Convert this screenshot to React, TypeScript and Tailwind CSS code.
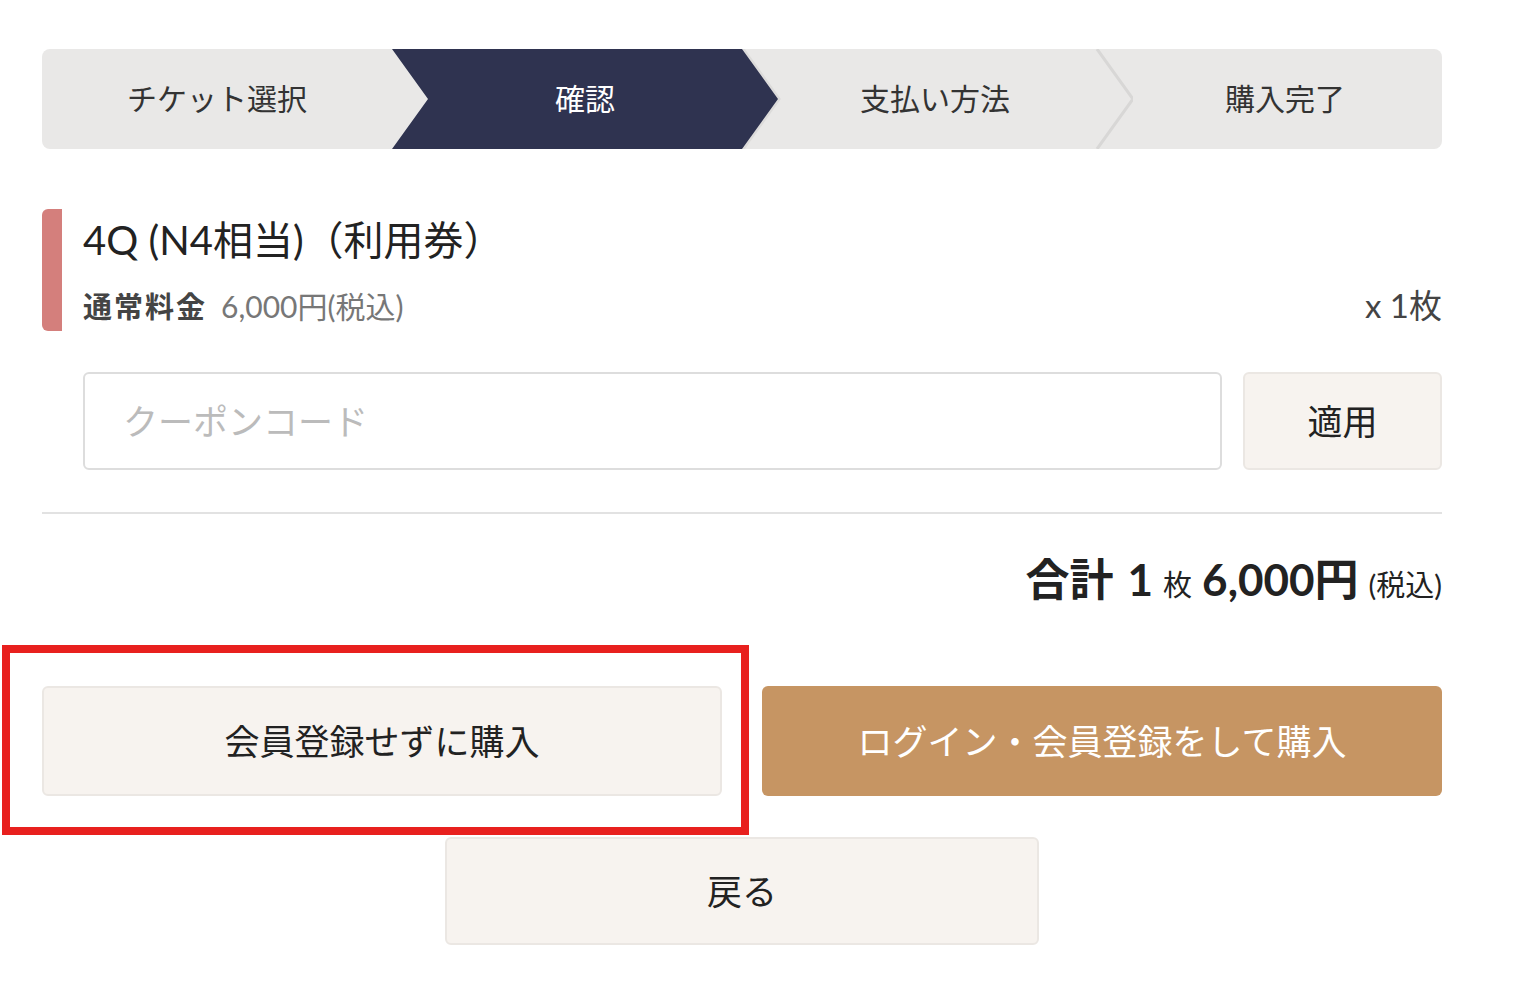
const font = "font-['Lato','Noto_Sans_CJK_JP',sans-serif]";

function Stepper() {
    const steps = ["チケット選択", "確認", "支払い方法", "購入完了"];
    const active = 1;

    return (
        <div className="relative flex h-[100px] rounded-lg bg-[#e9e8e7]">
            {steps.map((label, i) => (
                <div key={label} className="relative flex-1">
                    {/* active chevron */}
                    {i === active && (
                        <div className="absolute inset-y-0 left-0 z-10 w-[calc(100%+36px)] bg-[#2f3350] [clip-path:polygon(0_0,calc(100%-36px)_0,100%_50%,calc(100%-36px)_100%,0_100%,36px_50%)]" />
                    )}
                    {/* faint separator after inactive steps */}
                    {i > active && i < steps.length - 1 && (
                        <svg className="absolute top-0 right-[-41px] h-[100px] w-[40px]" viewBox="0 0 40 100">
                            <polyline points="4,0 40,50 4,100" fill="none" stroke="#d8d7d6" strokeWidth="3" />
                        </svg>
                    )}
                    {i === active && (
                        <svg className="absolute top-0 right-[-40px] h-[100px] w-[40px]" viewBox="0 0 40 100">
                            <polyline points="1,0 37,50 1,100" fill="none" stroke="#dcdbda" strokeWidth="3" />
                        </svg>
                    )}
                    <div
                        className={`relative z-20 flex h-full items-center justify-center pb-[2px] text-[30px] ${
                            i > 0 ? "pl-[36px]" : ""
                        } ${i === active ? "text-white" : "text-[#333]"}`}
                    >
                        {label}
                    </div>
                </div>
            ))}
        </div>
    );
}

function App() {
    return (
        <div className={`relative min-h-[988px] bg-white ${font}`}>
            <div className="w-[1400px] ml-[42px] pt-[49px]">
                {/* Steps */}
                <Stepper />

                {/* Ticket */}
                <div className="mt-[60px] flex h-[122px]">
                    <div className="w-[20px] rounded-l-md bg-[#d47f7c]" />
                    <div className="flex-1 pl-[21px]">
                        <div className="flex h-[62px] items-center text-[40px] text-[#222]">
                            4Q (N4相当)（利用券）
                        </div>
                        <div className="mt-[10px] flex h-[50px] items-center justify-between">
                            <div className="flex items-baseline gap-[14px]">
                                <span className="text-[29px] font-bold tracking-[2px] text-[#444]">通常料金</span>
                                <span className="text-[30px] text-[#777]">6,000円(税込)</span>
                            </div>
                            <div className="text-[33px] text-[#444]">x 1枚</div>
                        </div>
                    </div>
                </div>

                {/* Coupon */}
                <div className="mt-[41px] flex gap-[21px] pl-[41px]">
                    <input
                        placeholder="クーポンコード"
                        className="h-[98px] flex-1 rounded-md border-2 border-[#dddddd] px-[38px] text-[35px] text-[#333] outline-none placeholder:text-[#bbbbbb]"
                    />
                    <button className="h-[98px] w-[199px] rounded-md border-2 border-[#ebe7e3] bg-[#f7f3ef] text-[35px] text-[#222]">
                        適用
                    </button>
                </div>

                <div className="mt-[42px] border-t-2 border-[#e2e2e2]" />

                {/* Total */}
                <div className="mt-[32px] flex h-[56px] items-baseline justify-end text-[#222]">
                    <span className="text-[44px] font-bold">合計</span>
                    <span className="ml-[14px] text-[44px] font-bold">1</span>
                    <span className="ml-[10px] text-[29px]">枚</span>
                    <span className="ml-[10px] text-[44px] font-bold">6,000円</span>
                    <span className="ml-[10px] text-[29px]">(税込)</span>
                </div>

                {/* Actions */}
                <div className="mt-[84px] flex justify-between">
                    <button className="h-[110px] w-[680px] rounded-md border-2 border-[#ebe7e3] bg-[#f7f3ef] text-[35px] text-[#222]">
                        会員登録せずに購入
                    </button>
                    <button className="h-[110px] w-[680px] rounded-md bg-[#c69563] text-[35px] text-white">
                        ログイン・会員登録をして購入
                    </button>
                </div>
                <div className="mt-[41px] flex justify-center">
                    <button className="h-[108px] w-[594px] rounded-md border-2 border-[#ebe7e3] bg-[#f7f3ef] text-[35px] text-[#222]">
                        戻る
                    </button>
                </div>
            </div>

            {/* highlight annotation */}
            <div className="pointer-events-none absolute left-[2px] top-[645px] h-[190px] w-[747px] border-[8px] border-[#e8201e]" />
        </div>
    );
}

export default App;
